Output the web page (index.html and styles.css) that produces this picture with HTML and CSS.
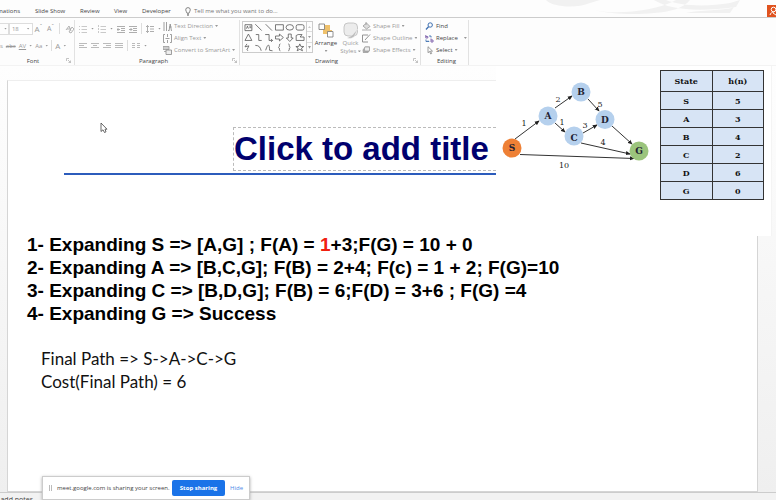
FILE: index.html
```html
<!DOCTYPE html>
<html lang="en">
<head>
<meta charset="utf-8">
<title>Presentation editor</title>
<link rel="stylesheet" href="styles.css">
</head>
<body>
<header class="topbar">
  <nav class="tabs">
    <a class="tab tab-animations" href="#">Animations</a>
    <a class="tab tab-slideshow" href="#">Slide Show</a>
    <a class="tab tab-review" href="#">Review</a>
    <a class="tab tab-view" href="#">View</a>
    <a class="tab tab-developer" href="#">Developer</a>
    <a class="tab tell" href="#"><svg width="6" height="9" viewBox="0 0 6 9"><path d="M2 6.2C2 5 .7 4.400.7 2.900a2.300 2.300 0 0 1 4.600 0C5.300 4.400 4 5 4 6.200zM2 7.300h2M2.300 8.500h1.400" fill="none" stroke="#666" stroke-width=".8"/></svg>Tell me what you want to do...</a>
  </nav>
  <svg class="clouds" width="200" height="15" viewBox="0 0 200 15"><path d="M4 0c6 7 30 9 44 3l10-3zM52 10c20 5 60 2 82-10h14c-6 8-20 12-36 13-20 2-44 1-60-3zM112 0c16 10 44 12 82 7l4-7-10 3c-24 4-50 3-64-3zM144 13c20-4 40-2 48-6l-4 6z" fill="#f1f1f1"/></svg>
  <button class="account" aria-label="Account"><svg width="9" height="12" viewBox="0 0 9 12"><circle cx="6.500" cy="4.500" r="2.300" fill="none" stroke="#fff"/><path d="M3 10c.5-2 2-3 4-3M6 8l3 2" stroke="#fff" fill="none"/></svg></button>
</header>

<section class="ribbon">
  <div class="group group-font">
    <div class="rows">
      <div class="row row-font1">
        <button class="box" aria-label="Font name"><i class="caret"></i></button>
        <select class="size" aria-label="Font size"><option>18</option></select><i class="caret size-caret"></i>
        <button>A<sup>ˆ</sup></button>
        <button class="small">A<sup>ˇ</sup></button>
        <i class="sep"></i>
        <button aria-label="Clear formatting"><svg width="9" height="10" viewBox="0 0 9 10"><path d="M1 6l3-4 2 5M2 5h4M4 8l3-5 2 2-3 4z" fill="none" stroke="#aaa" stroke-width=".9"/></svg></button>
      </div>
      <div class="row row-font2">
        <button>s</button><button><s>abc</s></button><button><u>AV</u></button><i class="caret"></i>
        <button>Aa</button><i class="caret"></i><i class="sep"></i><button class="big">A</button><i class="caret"></i>
      </div>
    </div>
    <div class="label"><span>Font</span><svg class="launch" width="5" height="5" viewBox="0 0 5 5"><path d="M.5 3V.5H3M2 2l2.500 2.500V2.500M4.500 4.500h-2" fill="none" stroke="#aaa" stroke-width=".7"/></svg></div>
  </div>

  <div class="group group-paragraph">
    <div class="split">
      <div class="rows">
        <div class="row row-para1">
          <button aria-label="Bullets"><svg width="8" height="8" viewBox="0 0 8 8"><path d="M0 1.500h1M2.500 1.500H8M0 4.500h1M2.500 4.500H8M0 7.500h1M2.500 7.500H8" stroke="#bbb" stroke-width=".8"/></svg></button><i class="caret"></i>
          <button aria-label="Numbering"><svg width="8" height="8" viewBox="0 0 8 8"><path d="M.5 0v2M2.500 1.500H8M.5 3v2M2.500 4.500H8M.5 6v2M2.500 7.500H8" stroke="#bbb" stroke-width=".8"/></svg></button><i class="caret"></i>
          <button aria-label="Decrease indent"><svg width="8" height="8" viewBox="0 0 8 8"><path d="M0 1.500h8M4 3.500h4M4 5.500h4M0 7.500h8M3 4.500H0l1.500-1.500M0 4.500L1.500 6" fill="none" stroke="#999" stroke-width=".8"/></svg></button>
          <button aria-label="Increase indent"><svg width="8" height="8" viewBox="0 0 8 8"><path d="M0 1.500h8M4 3.500h4M4 5.500h4M0 7.500h8M0 4.500h3L1.500 3M3 4.500L1.500 6" fill="none" stroke="#999" stroke-width=".8"/></svg></button>
          <i class="sep"></i>
          <button aria-label="Line spacing"><svg width="8" height="8" viewBox="0 0 8 8"><path d="M1.500.5v7M0 2L1.500.5 3 2M0 6l1.500 1.500L3 6M4 1.500h4M4 4h4M4 6.500h4" fill="none" stroke="#999" stroke-width=".8"/></svg></button><i class="caret"></i>
        </div>
        <div class="row row-para2">
          <button aria-label="Align left"><svg width="8" height="7" viewBox="0 0 8 7"><path d="M0 1.500h8M0 3.500h5M0 5.500h8" stroke="#bbb"/></svg></button>
          <button aria-label="Center"><svg width="8" height="7" viewBox="0 0 8 7"><path d="M0 1.500h8M2 3.500h4M0 5.500h8" stroke="#bbb"/></svg></button>
          <button aria-label="Align right"><svg width="8" height="7" viewBox="0 0 8 7"><path d="M0 1.500h8M3 3.500h5M0 5.500h8" stroke="#bbb"/></svg></button>
          <button aria-label="Justify"><svg width="8" height="7" viewBox="0 0 8 7"><path d="M0 1.500h8M0 3.500h8M0 5.500h8" stroke="#bbb"/></svg></button>
          <i class="sep"></i>
          <button aria-label="Columns"><svg width="8" height="7" viewBox="0 0 8 7"><path d="M0 1.500h3M5 1.500h3M0 3.500h3M5 3.500h3M0 5.500h3M5 5.500h3" stroke="#bbb"/></svg></button><i class="caret"></i>
        </div>
      </div>
      <div class="commands off">
        <button><svg width="9" height="9" viewBox="0 0 9 9"><path d="M1 0v9M3.500 0v9M6 5h2.500M6 9l1.200-7L8.500 9M5.500 8v1" fill="none" stroke="#888" stroke-width=".8"/></svg>Text Direction<i class="caret"></i></button>
        <button><svg width="9" height="9" viewBox="0 0 9 9"><path d="M2 .5H.5v8H2M7 .5h1.500v8H7M2.500 4.500h4M4.500 0v3M4.500 6v3" fill="none" stroke="#888" stroke-width=".8"/></svg>Align Text<i class="caret"></i></button>
        <button><svg width="9" height="9" viewBox="0 0 9 9"><path d="M0 .5h6v3H0zM1 5.500h2" fill="#ccc" stroke="#999" stroke-width=".8"/><path d="M3 4h5.500v4.500H3z" fill="#eee" stroke="#888" stroke-width=".8"/></svg>Convert to SmartArt<i class="caret"></i></button>
      </div>
    </div>
    <div class="label"><span>Paragraph</span><svg class="launch" width="5" height="5" viewBox="0 0 5 5"><path d="M.5 3V.5H3M2 2l2.500 2.500V2.500M4.500 4.500h-2" fill="none" stroke="#aaa" stroke-width=".7"/></svg></div>
  </div>

  <div class="group group-drawing">
    <div class="split">
      <div class="gallery">
        <svg width="64" height="31" viewBox="0 0 64 31" fill="none" stroke="#555" stroke-width=".8"><path d="M2 2.500h7v6H2zM3.500 6.500l1-2.500 1 2.500M6.500 4h2M6.500 5.500h2M12.500 2l6.500 6.500M23 2l6.500 6.500M33 2.500h8v5.500h-8z"/><ellipse cx="47.500" cy="5.200" rx="3.800" ry="2.800"/><rect x="54" y="2.500" width="8" height="5.500" rx="1.800"/><path d="M2 18.500L5.500 12 9 18.500zM13 12.500h3v6h3M22.500 12.500h4v6h3.500M28.500 17l1.500 1.500L28.500 20M33 14h4v-2l4 3.500-4 3.500v-2h-4zM46 12h3v4h2l-3.500 3.500L44 16h2zM54 18.500v-5l2-1h4l-2 2.500h4v3.500zM4 22l-2 3 4-1-2 4 1 1M12.500 23.500c4 0 5 2 6 5.500M23 28.500c2.500-8 4-6 4 0l3 .5M38 22c-2 0 0 3-2 3.500 2 .5 0 3.500 2 3.500M46 22c2 0 0 3 2 3.500-2 .5 0 3.500-2 3.500M57.700 22l1 2.500 3 .2-2.300 1.600 1 2.700-2.700-1.500L55 29l1-2.700-2.300-1.600 3-.2z"/></svg>
        <div class="scroller"><button aria-label="Scroll up"><i class="caret up"></i></button><button aria-label="Scroll down"><i class="caret"></i></button><button aria-label="More shapes"><i class="caret more"></i></button></div>
      </div>
      <button class="tall tall-arrange"><svg width="16" height="15" viewBox="0 0 16 15"><path d="M3 2h9v5H3zM5 7h9v4H5z" fill="#efc16b"/><path d="M1 1h5.500v5.500H1zM9.500 8.500H15V14H9.500z" fill="#fff" stroke="#777" stroke-width=".8"/></svg><span>Arrange</span><i class="caret"></i></button>
      <button class="tall tall-quick off"><svg width="16" height="17" viewBox="0 0 16 17"><rect x="1" y="1" width="13.500" height="13" rx="4" fill="#ececec" stroke="#bbb" stroke-width=".8"/><path d="M14.500 7l-5 6-5 3c2 .8 6 0 7-2z" fill="#bbb" stroke="#eee" stroke-width=".5"/></svg><span>Quick</span><span>Styles <i class="caret inline"></i></span></button>
      <div class="commands off">
        <button><svg width="9" height="9" viewBox="0 0 9 9"><path d="M1 4l3.500-3L8 4.500 4.500 7zM4 0v3M0 8h9" fill="#ddd" stroke="#999" stroke-width=".8"/></svg>Shape Fill<i class="caret"></i></button>
        <button><svg width="9" height="9" viewBox="0 0 9 9"><path d="M6 1H.5v7H6M3 6l5-5.500" fill="none" stroke="#888" stroke-width=".9"/></svg>Shape Outline<i class="caret"></i></button>
        <button><svg width="9" height="9" viewBox="0 0 9 9"><path d="M3 .5h5v4L6 7H1L.5 4z" fill="#aaa"/><rect x="2.500" y="1" width="5" height="4" rx="1" fill="#eee" stroke="#999" stroke-width=".7"/></svg>Shape Effects<i class="caret"></i></button>
      </div>
    </div>
    <div class="label"><span>Drawing</span><svg class="launch" width="5" height="5" viewBox="0 0 5 5"><path d="M.5 3V.5H3M2 2l2.500 2.500V2.500M4.500 4.500h-2" fill="none" stroke="#aaa" stroke-width=".7"/></svg></div>
  </div>

  <div class="group group-editing">
    <div class="commands">
      <button><svg width="9" height="9" viewBox="0 0 9 9"><circle cx="5.200" cy="3" r="2.200" fill="none" stroke="#3d6fb0" stroke-width="1"/><path d="M3.500 4.700L1 7.500" stroke="#3d6fb0" stroke-width="1.300"/></svg>Find</button>
      <button class="replace"><svg width="9" height="9" viewBox="0 0 9 9"><path d="M.8 1v3h2V2.500h-2M6 4.500V8h2V6H6" fill="none" stroke="#7a5ca8" stroke-width=".9"/><path d="M1 5.500v2h3L3 6.500M4 2h2v1.500" fill="none" stroke="#3d6fb0" stroke-width=".9"/></svg>Replace<i class="caret"></i></button>
      <button><svg width="9" height="9" viewBox="0 0 9 9"><path d="M3 .7v6l1.500-1.300L5.700 8l1-.5-1.200-2.400h2z" fill="#fff" stroke="#777" stroke-width=".7"/></svg>Select<i class="caret"></i></button>
    </div>
    <div class="label"><span>Editing</span></div>
  </div>
</section>

<main class="workspace">
  <article class="slide">
    <div class="title-area"><h1 class="title">Click to add title</h1></div>
    <div class="steps">
      <p>1- Expanding S =&gt; [A,G] ; F(A) = <span class="hot">1</span>+3;F(G) = 10 + 0</p>
      <p>2- Expanding A =&gt; [B,C,G]; F(B) = 2+4; F(c) = 1 + 2; F(G)=10</p>
      <p>3- Expanding C =&gt; [B,D,G]; F(B) = 6;F(D) = 3+6 ; F(G) =4</p>
      <p>4- Expanding G =&gt; Success</p>
    </div>
    <div class="result">
      <p>Final Path =&gt; S-&gt;A-&gt;C-&gt;G</p>
      <p>Cost(Final Path) = 6</p>
    </div>

    <figure class="problem">
      <svg class="graph" width="160" height="120" viewBox="496 70 160 120">
        <defs><marker id="tip" viewBox="0 0 6 6" refX="5" refY="3" markerWidth="5" markerHeight="5" orient="auto"><path d="M0 .5L6 3 0 5.500z" fill="#222"/></marker></defs>
        <g stroke="#333" stroke-width="1">
          <path d="M515 139L539 121" marker-end="url(#tip)"/><path d="M555 108L572 96" marker-end="url(#tip)"/><path d="M588 99L599 111" marker-end="url(#tip)"/><path d="M555 123L565 132" marker-end="url(#tip)"/><path d="M583 133L597 125" marker-end="url(#tip)"/><path d="M612 126L632 144" marker-end="url(#tip)"/><path d="M581 143L630 154" marker-end="url(#tip)"/><path d="M520 154.500L634 158.500" marker-end="url(#tip)"/>
        </g>
        <circle cx="512" cy="148" r="9.500" fill="#ee8035"/>
        <g fill="#b5d0ed"><circle cx="548" cy="116" r="9.500"/><circle cx="581" cy="92" r="9.500"/><circle cx="574" cy="136" r="9.500"/><circle cx="605" cy="119.500" r="9.500"/></g>
        <circle cx="639" cy="151" r="9.500" fill="#9bc47c"/>
        <g class="node-text"><text x="512" y="151">S</text><text x="548" y="119">A</text><text x="581" y="95">B</text><text x="574" y="141">C</text><text x="605" y="123">D</text><text x="639" y="154">G</text></g>
        <g class="edge-text"><text x="524" y="126">1</text><text x="558" y="102">2</text><text x="600" y="107">5</text><text x="562" y="125">1</text><text x="585" y="128">3</text><text x="603" y="145">4</text><text x="564" y="168">10</text></g>
      </svg>
      <table class="heuristic">
        <thead><tr><th>State</th><th>h(n)</th></tr></thead>
        <tbody>
          <tr><td>S</td><td>5</td></tr><tr><td>A</td><td>3</td></tr><tr><td>B</td><td>4</td></tr><tr><td>C</td><td>2</td></tr><tr><td>D</td><td>6</td></tr><tr><td>G</td><td>0</td></tr>
        </tbody>
      </table>
    </figure>
    <svg class="pointer" width="8" height="12" viewBox="0 0 8 12"><path d="M1 1v8.500l2-1.700L4.500 10.500l1.500-.7L5 7.200h2z" fill="#fff" stroke="#444" stroke-width=".8"/></svg>
  </article>
</main>
<footer class="notes"><span>Click to add notes</span></footer>

<aside class="share">
  <span class="grip"></span>
  <span class="share-text">meet.google.com is sharing your screen.</span>
  <button class="stop">Stop sharing</button>
  <a class="hide" href="#">Hide</a>
</aside>
</body>
</html>
```
FILE: styles.css
```css
* { box-sizing: border-box; }
body {
  margin: 0;
  height: 100vh;
  display: flex;
  flex-direction: column;
  overflow: hidden;
  background: #fdfdfd;
  color: #444;
  font: 6px/8px "Open Sans", "Noto Sans", sans-serif;
}
button {
  margin: 0;
  padding: 0;
  border: 0;
  background: none;
  color: inherit;
  font: inherit;
  white-space: nowrap;
}
a { color: inherit; text-decoration: none; }
p, h1, figure { margin: 0; }
svg { display: block; flex: none; }

/* Tab strip */
.topbar {
  flex: none;
  display: flex;
  justify-content: space-between;
  height: 18px;
  border-bottom: 1px solid #ccc;
}
.tabs { display: flex; padding-top: 7px; white-space: nowrap; }
.tab { flex: none; }
.tab-animations { width: 20px; display: flex; justify-content: flex-end; }
.tab-slideshow { margin-left: 15px; width: 45px; }
.tab-review { width: 34px; }
.tab-view { width: 28px; }
.tab-developer { width: 43px; }
.tell { display: flex; gap: 3px; color: #777; }
.clouds { margin-left: auto; margin-right: 25px; }
.account { width: 9px; height: 12px; margin-top: 5px; background: #e0531f; }

/* Ribbon */
.ribbon { flex: none; display: flex; height: 48px; padding-top: 2px; border-bottom: 1px solid #f3f3f3; }
.group { flex: none; display: flex; flex-direction: column; border-right: 1px solid #e2e2e2; height: 45px; }
.group-font { width: 75px; }
.group-paragraph { width: 165px; }
.group-drawing { width: 181px; }
.group-editing { width: 48px; padding-left: 4px; }
.rows { display: flex; flex-direction: column; height: 36px; color: #999; }
.row { display: flex; align-items: center; height: 17px; }
.label { display: flex; align-items: center; height: 9px; }
.label span { flex: 1; text-align: center; }
.group-font .label { padding-right: 1px; }
.group-font .label span { padding-left: 0; padding-right: 0; }
.launch { margin-right: 2px; }
.split { display: flex; height: 36px; }
.caret { flex: none; display: block; width: 3px; height: 2px; background: #999; clip-path: polygon(0 0, 100% 0, 50% 100%); }
.caret.up { transform: rotate(180deg); opacity: .5; }
.caret.more { height: 3px; }
.caret.inline { display: inline-block; vertical-align: middle; }
.sep { flex: none; width: 1px; height: 11px; background: #ddd; }
.row-font1 { gap: 5px; font-size: 8px; }
.row-font1 sup { font-size: 6px; line-height: 0; }
.small { font-size: 7px; }
.box { display: flex; align-items: center; width: 9px; height: 12px; padding-left: 4px; border: 1px solid #ddd; border-left: 0; }
.size { appearance: none; width: 24px; height: 12px; margin-left: -5px; padding: 0 2px; border: 1px solid #ddd; border-radius: 0; background: #fff; color: #999; font: 6px/8px "Open Sans", sans-serif; }
.size-caret { margin-left: -11px; }
.row-font2 { gap: 3px; }
.big { font-size: 8px; }
.row-para1, .row-para2 { gap: 4px; padding-left: 4px; }
.commands { display: flex; flex-direction: column; height: 36px; }
.commands button { display: flex; align-items: center; gap: 2px; height: 12px; }
.off { color: #999; }
.group-paragraph .rows { width: 88px; }
.replace .caret { margin-left: 4px; }

.gallery { display: flex; width: 71px; height: 32px; margin: 1px 0 0 2px; border: 1px solid #ccc; }
.scroller { display: flex; flex-direction: column; width: 7px; border-left: 1px solid #ccc; }
.scroller button { flex: 1; display: grid; place-items: center; border-bottom: 1px solid #ddd; }
.scroller button:last-child { border-bottom: 0; }
.gallery svg { width: 63px; }
.tall { display: flex; flex-direction: column; align-items: center; padding-top: 2px; }
.tall svg { height: 17px; }
.tall-arrange { width: 26px; }
.tall-quick { width: 23px; }
.tall-arrange .caret { margin-top: 3px; }

/* Slide */
.workspace {
  flex: 1;
  display: flex;
  min-height: 0;
  padding: 14px 18px 0 7px;
  background: linear-gradient(#fefefe, #efefef);
}
.slide { flex: 1; position: relative; padding: 46px 0 0; border: 1px solid #d5d5d5; border-top-color: #eee; background: #fff; }
.title-area { margin: 0 56px; padding-bottom: 2px; border-bottom: 2px solid #2c5cbc; }
.title {
  margin-left: 169px;
  height: 44px;
  border: 1px dashed #bbb;
  color: #00006e;
  font: bold 33px/42px "Liberation Sans", Arial, sans-serif;
}
.steps { margin: 58px 0 0 19px; color: #000; font: bold 19px/23px "Liberation Sans", Arial, sans-serif; white-space: nowrap; }
.hot { color: #f02010; }
.result { margin: 22px 0 0 33px; color: #111; font: 17px/23px Lato, sans-serif; }

/* Picture resting over the slide's corner */
.problem { position: absolute; top: -15px; right: -15px; display: flex; gap: 4px; width: 276px; height: 170px; padding-top: 4px; background: #fff; border-right: 1px solid #f4f4f4; }
.node-text { font: bold 9px "DejaVu Serif", serif; fill: #223; text-anchor: middle; }
.edge-text { font: 8px "DejaVu Serif", serif; fill: #222; text-anchor: middle; }
.heuristic {
  width: 104px;
  height: 129px;
  border-collapse: collapse;
  table-layout: fixed;
  background: #d7e4f5;
  color: #111;
  font: bold 8px/10px "DejaVu Serif", serif;
  text-align: center;
}
.heuristic th, .heuristic td { height: 18px; padding: 0; border: 1px solid #333; }
.heuristic th { height: 21px; }
.pointer { position: absolute; left: 92px; top: 41px; }

.notes { flex: none; height: 8px; overflow: hidden; border-top: 1px solid #ccc; background: #f2f2f2; padding-top: 3px; font-size: 7px; }
.notes span { display: flex; justify-content: flex-end; width: 33px; white-space: nowrap; }

/* Screen sharing bar */
.share {
  position: absolute;
  left: 42px;
  bottom: 0;
  display: flex;
  align-items: center;
  width: 208px;
  height: 24px;
  padding: 0 6px;
  border: 1px solid #ccc;
  background: #fff;
  box-shadow: 0 1px 3px #aaa;
  white-space: nowrap;
}
.grip { width: 3px; height: 6px; margin-right: 5px; border: solid #bbb; border-width: 0 1px; }
.share-text { flex: 1; }
.stop { width: 53px; height: 16px; border-radius: 2px; background: #1a73e8; color: #fff; font-weight: bold; }
.hide { margin-left: 5px; color: #4a8ae8; }
```
